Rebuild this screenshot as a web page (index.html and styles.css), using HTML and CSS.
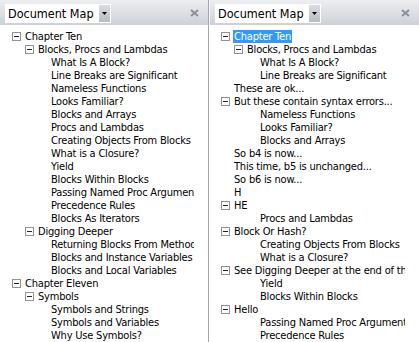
FILE: index.html
```html
<!DOCTYPE html>
<html lang="en">
<head>
  <meta charset="UTF-8">
  <meta name="viewport" content="width=device-width, initial-scale=1.0">
  <title>Document Map</title>
  <link rel="stylesheet" href="styles.css">
</head>
<body>
  <div class="maps">
    <section class="pane">
      <div class="pane-head">
        <div class="picker">
          <span class="picker-label">Document Map</span>
          <span class="drop"><svg width="5" height="3" viewBox="0 0 5 3"><path d="M0 0h5L2.5 3z" fill="#000"/></svg></span>
        </div>
        <span class="close"><svg width="9" height="8" viewBox="0 0 9 8"><path d="M1 1l7 6M8 1L1 7" stroke="#8b9098" stroke-width="2"/></svg></span>
      </div>
      <ul class="tree">
        <li class="d0"><span class="box"></span>Chapter Ten</li>
        <li class="d1"><span class="box"></span>Blocks, Procs and Lambdas</li>
        <li class="d2"><span class="slot"></span>What Is A Block?</li>
        <li class="d2"><span class="slot"></span>Line Breaks are Significant</li>
        <li class="d2"><span class="slot"></span>Nameless Functions</li>
        <li class="d2"><span class="slot"></span>Looks Familiar?</li>
        <li class="d2"><span class="slot"></span>Blocks and Arrays</li>
        <li class="d2"><span class="slot"></span>Procs and Lambdas</li>
        <li class="d2"><span class="slot"></span>Creating Objects From Blocks</li>
        <li class="d2"><span class="slot"></span>What is a Closure?</li>
        <li class="d2"><span class="slot"></span>Yield</li>
        <li class="d2"><span class="slot"></span>Blocks Within Blocks</li>
        <li class="d2"><span class="slot"></span>Passing Named Proc Arguments</li>
        <li class="d2"><span class="slot"></span>Precedence Rules</li>
        <li class="d2"><span class="slot"></span>Blocks As Iterators</li>
        <li class="d1"><span class="box"></span>Digging Deeper</li>
        <li class="d2"><span class="slot"></span>Returning Blocks From Methods</li>
        <li class="d2"><span class="slot"></span>Blocks and Instance Variables</li>
        <li class="d2"><span class="slot"></span>Blocks and Local Variables</li>
        <li class="d0"><span class="box"></span>Chapter Eleven</li>
        <li class="d1"><span class="box"></span>Symbols</li>
        <li class="d2"><span class="slot"></span>Symbols and Strings</li>
        <li class="d2"><span class="slot"></span>Symbols and Variables</li>
        <li class="d2"><span class="slot"></span>Why Use Symbols?</li>
      </ul>
    </section>
    <section class="pane">
      <div class="pane-head">
        <div class="picker">
          <span class="picker-label">Document Map</span>
          <span class="drop"><svg width="5" height="3" viewBox="0 0 5 3"><path d="M0 0h5L2.5 3z" fill="#000"/></svg></span>
        </div>
        <span class="close"><svg width="9" height="8" viewBox="0 0 9 8"><path d="M1 1l7 6M8 1L1 7" stroke="#8b9098" stroke-width="2"/></svg></span>
      </div>
      <ul class="tree">
        <li class="d0"><span class="box"></span><span class="selected">Chapter Ten</span></li>
        <li class="d1"><span class="box"></span>Blocks, Procs and Lambdas</li>
        <li class="d2"><span class="slot"></span>What Is A Block?</li>
        <li class="d2"><span class="slot"></span>Line Breaks are Significant</li>
        <li class="d0"><span class="slot"></span>These are ok...</li>
        <li class="d0"><span class="box"></span>But these contain syntax errors...</li>
        <li class="d2"><span class="slot"></span>Nameless Functions</li>
        <li class="d2"><span class="slot"></span>Looks Familiar?</li>
        <li class="d2"><span class="slot"></span>Blocks and Arrays</li>
        <li class="d0"><span class="slot"></span>So b4 is now...</li>
        <li class="d0"><span class="slot"></span>This time, b5 is unchanged...</li>
        <li class="d0"><span class="slot"></span>So b6 is now...</li>
        <li class="d0"><span class="slot"></span>H</li>
        <li class="d0"><span class="box"></span>HE</li>
        <li class="d2"><span class="slot"></span>Procs and Lambdas</li>
        <li class="d0"><span class="box"></span>Block Or Hash?</li>
        <li class="d2"><span class="slot"></span>Creating Objects From Blocks</li>
        <li class="d2"><span class="slot"></span>What is a Closure?</li>
        <li class="d0"><span class="box"></span>See Digging Deeper at the end of this chapter</li>
        <li class="d2"><span class="slot"></span>Yield</li>
        <li class="d2"><span class="slot"></span>Blocks Within Blocks</li>
        <li class="d0"><span class="box"></span>Hello</li>
        <li class="d2"><span class="slot"></span>Passing Named Proc Arguments</li>
        <li class="d2"><span class="slot"></span>Precedence Rules</li>
      </ul>
    </section>
  </div>
</body>
</html>
```

FILE: styles.css
```css
body {
  margin: 0;
  background: #fff;
  font-family: "Liberation Sans", Arial, sans-serif;
  color: #000;
}
.maps {
  display: flex;
  height: 342px;
  overflow: hidden;
}
.pane {
  width: 208px;
  border-right: 1px solid #a3a6aa;
  overflow: hidden;
}
.pane + .pane {
  flex: 1;
  border-right: none;
}
.pane-head {
  height: 25px;
  background: linear-gradient(#eceef1, #cdd1d6);
  display: flex;
  align-items: center;
  justify-content: space-between;
  padding: 0 9px 0 5px;
}
.pane + .pane .pane-head {
  border-left: 1px solid #f4f5f7;
}
.picker {
  display: flex;
  align-items: stretch;
  width: 104px;
  height: 17px;
  background: #fff;
  border: 1px solid #fff;
  margin-top: 2px;
}
.picker-label {
  flex: 1;
  font-family: "DejaVu Sans Condensed", "DejaVu Sans", sans-serif;
  font-size: 12.5px;
  line-height: 17px;
  padding-left: 2px;
}
.drop {
  width: 11px;
  display: flex;
  align-items: center;
  justify-content: center;
  background: linear-gradient(#d9dce0, #b9bdc3);
}
.close {
  display: flex;
  margin-top: 1px;
}
.tree {
  list-style: none;
  margin: 0;
  padding: 5px 14px 0 0;
  font-family: "DejaVu Sans Condensed", "DejaVu Sans", sans-serif;
  font-size: 11px;
  letter-spacing: -0.2px;
}
.tree li {
  display: flex;
  align-items: center;
  height: 13px;
  white-space: nowrap;
  overflow: hidden;
}
.d0 { padding-left: 12px; }
.d1 { padding-left: 25px; }
.d2 { padding-left: 38px; }
.box, .slot {
  flex: none;
  width: 9px;
  height: 9px;
  margin-right: 4px;
  box-sizing: border-box;
}
.box {
  position: relative;
  border: 1px solid #939393;
  background: #fff;
}
.box::after {
  content: "";
  position: absolute;
  left: 1px;
  top: 3px;
  width: 5px;
  height: 1px;
  background: #222;
}
.selected {
  background: #3399ff;
  color: #fff;
  padding: 0 1px;
  margin-left: -1px;
  line-height: 13px;
}
```
